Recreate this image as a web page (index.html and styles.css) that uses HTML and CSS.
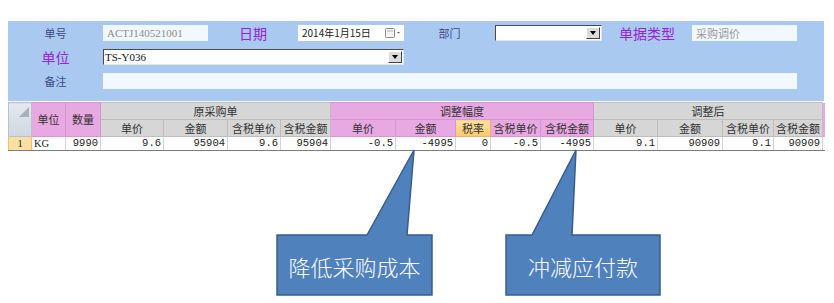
FILE: index.html
```html
<!DOCTYPE html>
<html lang="zh-CN">
<head>
    <meta charset="UTF-8">
    <title>采购调价单</title>
    <link rel="stylesheet" href="styles.css">
</head>
<body>

<div class="page">
    <div class="bill-head">
        <div class="form-row">
            <label class="lbl">单号</label>
            <div class="field readonly">ACTJ140521001</div>
            <label class="lbl lbl-key">日期</label>
            <div class="field date">
                <span>2014年1月15日</span>
                <svg class="cal" width="16" height="10" viewBox="0 0 16 10">
                    <rect x="0.5" y="0.5" width="9" height="9" rx="1" fill="#f4f4f4" stroke="#8a8a8a"/>
                    <line x1="2" y1="3" x2="8" y2="3" stroke="#b0b0b0"/>
                    <path d="M12 4 L15 4 L13.5 5.5 Z" fill="#555"/>
                </svg>
            </div>
            <label class="lbl">部门</label>
            <div class="field select">
                <span></span>
                <span class="drop"></span>
            </div>
            <label class="lbl lbl-key">单据类型</label>
            <div class="field readonly cn">采购调价</div>
        </div>

        <div class="form-row">
            <label class="lbl lbl-key">单位</label>
            <div class="field select span-3">
                <span class="mono">TS-Y036</span>
                <span class="drop"></span>
            </div>
        </div>

        <div class="form-row">
            <label class="lbl">备注</label>
            <div class="field span-7"></div>
        </div>
    </div>

    <table class="grid">
        <colgroup>
            <col style="width:23px"><col style="width:34px"><col style="width:35px">
            <col style="width:63px"><col style="width:64px"><col style="width:53px"><col style="width:50px">
            <col style="width:65px"><col style="width:60px"><col style="width:35px"><col style="width:50px"><col style="width:53px">
            <col style="width:64px"><col style="width:65px"><col style="width:51px"><col style="width:49px">
            <col style="width:2px">
        </colgroup>
        <thead>
            <tr>
                <th rowspan="2" class="corner"><span class="tri"></span></th>
                <th rowspan="2" class="pink">单位</th>
                <th rowspan="2" class="pink">数量</th>
                <th colspan="4" class="gray">原采购单</th>
                <th colspan="5" class="pink">调整幅度</th>
                <th colspan="4" class="gray">调整后</th>
                <th rowspan="2" class="pink edge"></th>
            </tr>
            <tr>
                <th class="gray">单价</th>
                <th class="gray">金额</th>
                <th class="gray">含税单价</th>
                <th class="gray">含税金额</th>
                <th class="pink">单价</th>
                <th class="pink">金额</th>
                <th class="orange">税率</th>
                <th class="pink">含税单价</th>
                <th class="pink">含税金额</th>
                <th class="gray">单价</th>
                <th class="gray">金额</th>
                <th class="gray">含税单价</th>
                <th class="gray">含税金额</th>
            </tr>
        </thead>
        <tbody>
            <tr>
                <td class="rownum">1</td>
                <td class="left">KG</td>
                <td>9990</td>
                <td>9.6</td>
                <td>95904</td>
                <td>9.6</td>
                <td>95904</td>
                <td>-0.5</td>
                <td>-4995</td>
                <td>0</td>
                <td>-0.5</td>
                <td>-4995</td>
                <td>9.1</td>
                <td>90909</td>
                <td>9.1</td>
                <td>90909</td>
                <td class="edge-cell"></td>
            </tr>
        </tbody>
    </table>

    <!-- callouts -->
    <svg class="callouts" width="834" height="303" viewBox="0 0 834 303">
        <path d="M277 235 L367 235 L414 150 L407 235 L432 235 L432 295 L277 295 Z" fill="#4f81bd" stroke="#385d8a" stroke-width="1.5"/>
        <path d="M506 235 L532 235 L576 150 L572 235 L660 235 L660 295 L506 295 Z" fill="#4f81bd" stroke="#385d8a" stroke-width="1.5"/>
        <text x="354.5" y="276" class="callout-text">降低采购成本</text>
        <text x="583" y="276" class="callout-text">冲减应付款</text>
    </svg>
</div>

</body>
</html>
```

FILE: styles.css
```css
body {
    margin: 0;
    background-color: #fff;
    font-family: "Noto Sans CJK SC", "DejaVu Sans", sans-serif;
}

.page {
    position: relative;
    width: 834px;
    height: 303px;
    padding-top: 21px;
    box-sizing: border-box;
}

.bill-head {
    margin-left: 8px;
    width: 816px;
    background-color: #a9c9f0;
    padding: 4px 0 12px 0;
    display: flex;
    flex-direction: column;
    gap: 8px;
}

.form-row {
    display: grid;
    grid-template-columns: 95px 105px 90px 106px 91px 107px 90px 105px;
    height: 16px;
    align-items: center;
}

.lbl {
    text-align: center;
    font-size: 11px;
    color: #3e4a86;
    line-height: 16px;
}

.lbl-key {
    font-size: 14px;
    color: #9a22d6;
}

.field {
    height: 16px;
    box-sizing: border-box;
    background-color: #f2f8ff;
    font-size: 11px;
    line-height: 16px;
    padding: 0 4px;
    display: flex;
    align-items: center;
    overflow: hidden;
}

.readonly {
    color: #8c8c8c;
    font-family: "Liberation Serif", serif;
}

.readonly.cn {
    font-family: "Noto Sans CJK SC", sans-serif;
    color: #9a9a9a;
}

.date {
    background-color: #fff;
    justify-content: space-between;
    color: #222;
    font-size: 10px;
    padding: 0 3px 0 4px;
}

.select {
    background-color: #fff;
    border-top: 1px solid #4a4a4a;
    border-left: 1px solid #4a4a4a;
    border-bottom: 1px solid #e6e6e6;
    border-right: 1px solid #e6e6e6;
    justify-content: space-between;
    padding: 0 1px 0 1px;
}

.select .drop {
    width: 14px;
    height: 12px;
    box-sizing: border-box;
    background-color: #dcdcdc;
    border: 1px solid;
    border-color: #fff #444 #444 #fff;
    position: relative;
}

.select .drop::after {
    content: "";
    position: absolute;
    left: 3px;
    top: 3px;
    border-left: 3px solid transparent;
    border-right: 3px solid transparent;
    border-top: 4px solid #000;
}

.mono {
    font-family: "Liberation Serif", serif;
    font-size: 11px;
    color: #111;
}

.span-3 {
    grid-column: 2 / span 3;
}

.span-7 {
    grid-column: 2 / span 7;
}

/* grid */
.grid {
    margin-left: 8px;
    margin-top: 1px;
    border-collapse: collapse;
    table-layout: fixed;
    width: 816px;
    font-size: 11px;
}

.grid th {
    font-weight: normal;
    color: #333;
    height: 16px;
    padding: 0;
    line-height: 15px;
    border: 1px solid #c6c6c6;
    text-align: center;
    white-space: nowrap;
    overflow: hidden;
}

.grid th.pink {
    background-color: #e8a8e2;
    border-color: #d895d2;
}

.grid th.gray {
    background-color: #d6d6d6;
    border-color: #bdbdbd;
}

.grid th.orange {
    background: linear-gradient(#fde3a6, #f9c96c);
    border-color: #e2b868;
}

.grid th.corner {
    background: linear-gradient(#e4e9f0, #cfd7e2);
    border-color: #b7c0cc;
    position: relative;
}

.tri {
    position: absolute;
    right: 2px;
    top: 4px;
    width: 0;
    height: 0;
    border-left: 10px solid transparent;
    border-bottom: 10px solid #a8b0bb;
}

.grid th.edge {
    border: none;
}

.grid td {
    height: 13px;
    padding: 0 2px;
    font-family: "Liberation Mono", monospace;
    font-size: 10.5px;
    line-height: 13px;
    text-align: right;
    color: #222;
    border: 1px solid #d4d4d4;
    border-bottom: 1px solid #7d7d7d;
    white-space: nowrap;
    overflow: hidden;
}

.grid td.left {
    text-align: left;
    font-family: "Liberation Serif", serif;
}

.grid td.rownum {
    background-color: #fce0a2;
    text-align: center;
    border-color: #e6c27a;
    border-bottom: 1px solid #7d7d7d;
    font-family: "Liberation Serif", serif;
}

.grid td.edge-cell {
    border: none;
    border-bottom: 1px solid #7d7d7d;
    padding: 0;
}

.callouts {
    position: absolute;
    left: 0;
    top: 0;
    pointer-events: none;
}

.callout-text {
    fill: #fff;
    font-size: 22px;
    font-family: "Noto Sans CJK SC", sans-serif;
    font-weight: 300;
    text-anchor: middle;
}
```
